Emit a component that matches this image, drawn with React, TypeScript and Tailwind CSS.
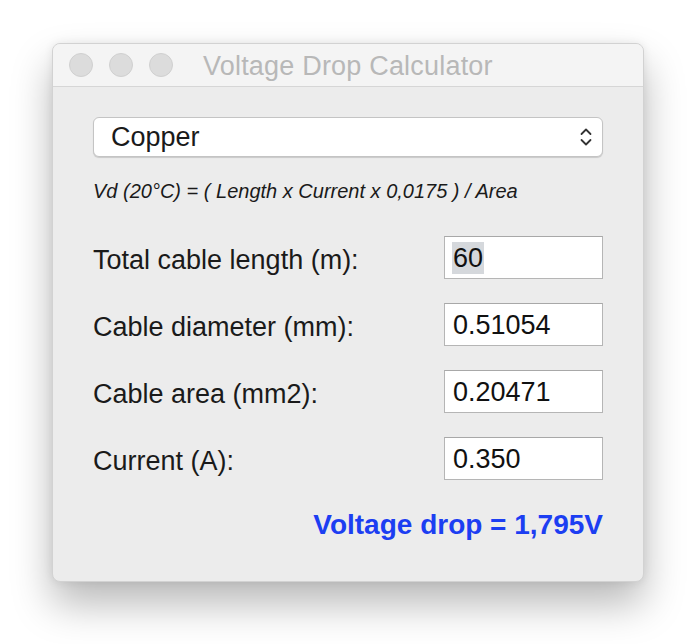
import React, { useState } from 'react';

const fields = [
  { label: 'Total cable length (m):', value: '60', selected: true },
  { label: 'Cable diameter (mm):', value: '0.51054' },
  { label: 'Cable area (mm2):', value: '0.20471' },
  { label: 'Current (A):', value: '0.350' },
];

const App: React.FC = () => {
  const [metal] = useState('Copper');

  return (
    <div className="w-[700px] h-[644px] bg-white pt-[43px] pl-[52px] font-['Liberation_Sans',Arial,sans-serif]">
      {/* Window */}
      <div className="w-[592px] h-[539px] rounded-[8px] bg-[#ececec] border border-[#d2d2d2] shadow-[0_22px_40px_rgba(0,0,0,0.28),0_0_10px_rgba(0,0,0,0.08)] overflow-hidden flex flex-col">
        {/* Title bar */}
        <div className="h-[43px] shrink-0 bg-[#f4f4f4] border-b border-[#d6d6d6] flex items-center px-[16px]">
          <div className="flex gap-[16px]">
            <span className="w-[24px] h-[24px] rounded-full bg-[#dcdcdc] border border-[#d0d0d0]" />
            <span className="w-[24px] h-[24px] rounded-full bg-[#dcdcdc] border border-[#d0d0d0]" />
            <span className="w-[24px] h-[24px] rounded-full bg-[#dcdcdc] border border-[#d0d0d0]" />
          </div>
          <div className="ml-[30px] pt-[3px] text-[27px] leading-none text-[#b8b8b8] tracking-[0.2px]">Voltage Drop Calculator</div>
        </div>

        {/* Content */}
        <div className="flex flex-col px-[40px] pt-[30px]">
          <div className="h-[40px] bg-white rounded-[6px] border border-[#c4c4c4] shadow-[0_1px_1px_rgba(0,0,0,0.15)] flex items-center justify-between pl-[17px] pr-[9px]">
            <span className="text-[27px] leading-none text-[#1a1a1a]">{metal}</span>
            <svg width="14" height="22" viewBox="0 0 14 22" fill="none" stroke="#333" strokeWidth="1.8" strokeLinecap="round" strokeLinejoin="round">
              <path d="M2.5 8 L7 3.5 L11.5 8" />
              <path d="M2.5 14 L7 18.5 L11.5 14" />
            </svg>
          </div>

          <div className="mt-[19px] text-[20px] leading-[30px] italic text-[#1a1a1a]">
            Vd (20°C) = ( Length x Current x 0,0175 ) / Area
          </div>

          <div className="mt-[30px] flex flex-col gap-[24px]">
            {fields.map((f) => (
              <div key={f.label} className="flex items-center justify-between">
                <span className="pt-[6px] text-[27px] leading-none text-[#1a1a1a]">{f.label}</span>
                <div className="w-[159px] h-[43px] bg-white border border-[#b5b5b5] border-t-[#a8a8a8] flex items-center pl-[7px]">
                  <span className={`text-[27px] leading-[32px] text-[#111] px-[1px] ${f.selected ? 'bg-[#d5d8dc]' : ''}`}>{f.value}</span>
                </div>
              </div>
            ))}
          </div>

          <div className="mt-[24px] text-right text-[28px] leading-[42px] font-bold text-[#1c3ef2]">Voltage drop = 1,795V</div>
        </div>
      </div>
    </div>
  );
};

export default App;
